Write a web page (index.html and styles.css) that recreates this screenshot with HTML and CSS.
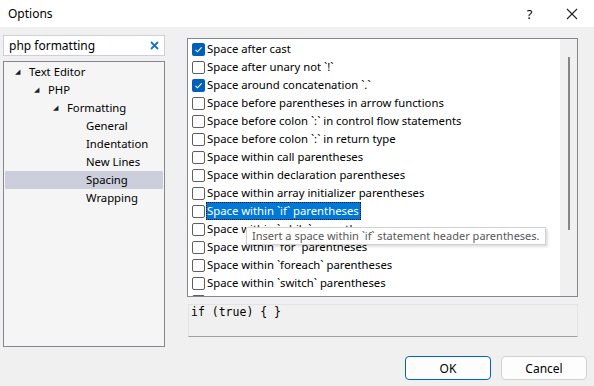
FILE: index.html
```html
<!DOCTYPE html>
<html lang="en">
<head>
    <meta charset="UTF-8">
    <title>Options</title>
    <link rel="stylesheet" href="styles.css">
</head>
<body>
    <!-- Title bar -->
    <div class="titlebar">
        <span class="title">Options</span>
        <span class="title-btn help">?</span>
        <span class="title-btn close">
            <svg width="12" height="12" viewBox="0 0 12 12"><path d="M1 1L11 11M11 1L1 11" stroke="#222" stroke-width="1.1" fill="none"/></svg>
        </span>
    </div>

    <div class="content">
        <!-- Left: search + tree -->
        <div class="left">
            <div class="search">
                <span class="search-text">php formatting</span>
                <svg class="search-clear" width="9" height="9" viewBox="0 0 9 9"><path d="M1 1L8 8M8 1L1 8" stroke="#1c73c6" stroke-width="1.8" fill="none"/></svg>
            </div>
            <ul class="tree">
                <li class="node lvl0"><span class="arrow">◢</span>Text Editor</li>
                <li class="node lvl1"><span class="arrow">◢</span>PHP</li>
                <li class="node lvl2"><span class="arrow">◢</span>Formatting</li>
                <li class="node lvl3">General</li>
                <li class="node lvl3">Indentation</li>
                <li class="node lvl3">New Lines</li>
                <li class="node lvl3 current">Spacing</li>
                <li class="node lvl3">Wrapping</li>
            </ul>
        </div>

        <!-- Right: option list + preview -->
        <div class="right">
            <div class="options">
                <ul class="checks">
                    <li><span class="box checked"></span><span class="label">Space after cast</span></li>
                    <li><span class="box"></span><span class="label">Space after unary not `!`</span></li>
                    <li><span class="box checked"></span><span class="label">Space around concatenation `.`</span></li>
                    <li><span class="box"></span><span class="label">Space before parentheses in arrow functions</span></li>
                    <li><span class="box"></span><span class="label">Space before colon `:` in control flow statements</span></li>
                    <li><span class="box"></span><span class="label">Space before colon `:` in return type</span></li>
                    <li><span class="box"></span><span class="label">Space within call parentheses</span></li>
                    <li><span class="box"></span><span class="label">Space within declaration parentheses</span></li>
                    <li><span class="box"></span><span class="label">Space within array initializer parentheses</span></li>
                    <li><span class="box"></span><span class="label selected">Space within `if` parentheses</span></li>
                    <li><span class="box"></span><span class="label">Space within `while` parentheses</span></li>
                    <li><span class="box"></span><span class="label">Space within `for` parentheses</span></li>
                    <li><span class="box"></span><span class="label">Space within `foreach` parentheses</span></li>
                    <li><span class="box"></span><span class="label">Space within `switch` parentheses</span></li>
                    <li><span class="box"></span></li>
                </ul>
                <div class="scrollbar"><div class="thumb"></div></div>
                <div class="tooltip">Insert a space within `if` statement header parentheses.</div>
            </div>
            <div class="preview">if (true) { }</div>
        </div>
    </div>

    <div class="buttons">
        <button class="btn default">OK</button>
        <button class="btn">Cancel</button>
    </div>
</body>
</html>
```

FILE: styles.css
```css
body {
    margin: 0;
    width: 594px;
    height: 386px;
    overflow: hidden;
    background-color: #f0f0f0;
    font-family: "Noto Sans", sans-serif;
    font-size: 11.3px;
    color: #000;
}

.titlebar {
    height: 27px;
    background-color: #fff;
    display: flex;
    align-items: center;
}

.title {
    flex: 1;
    padding-left: 8px;
    font-size: 12px;
}

.title-btn {
    width: 45px;
    text-align: center;
}

.help {
    font-size: 13px;
    margin-right: -3px;
}

.close {
    display: flex;
    justify-content: center;
}

.content {
    display: flex;
    padding: 8px 16px 0 3px;
    gap: 22px;
}

/* left column */
.left {
    width: 162px;
}

.search {
    height: 19px;
    border: 1px solid #cfcfd8;
    background-color: #fff;
    display: flex;
    align-items: center;
    padding: 0 5px;
    font-size: 12px;
}

.search-text {
    flex: 1;
}

.tree {
    list-style-type: none;
    margin: 5px 0 0 0;
    padding: 1px 1px 0 1px;
    height: 283px;
    border: 1px solid #828790;
    background-color: #f5f5f5;
}

.node {
    height: 18px;
    line-height: 18px;
    display: flex;
    align-items: center;
    white-space: nowrap;
}

.arrow {
    font-size: 7px;
    width: 14px;
    color: #1e1e1e;
}

.lvl0 { padding-left: 10px; }
.lvl1 { padding-left: 29px; }
.lvl2 { padding-left: 48px; }
.lvl3 { padding-left: 81px; }

.current {
    background-color: #cccedb;
}

/* right column */
.right {
    flex: 1;
    display: flex;
    flex-direction: column;
    margin-top: 3px;
}

.options {
    position: relative;
    height: 257px;
    border: 1px solid #828790;
    background-color: #fff;
    display: flex;
    overflow: hidden;
}

.checks {
    list-style-type: none;
    margin: 0;
    padding: 1px 0 0 4px;
    flex: 1;
}

.checks li {
    height: 18px;
    display: flex;
    align-items: center;
    white-space: nowrap;
}

.box {
    width: 11px;
    height: 11px;
    border: 1px solid #5f5f5f;
    border-radius: 2px;
    background-color: #fff;
    margin-right: 1px;
    flex-shrink: 0;
}

.box.checked {
    width: 13px;
    height: 13px;
    border: none;
    background-color: #005fb8;
    background-image: url("data:image/svg+xml,%3Csvg xmlns='http://www.w3.org/2000/svg' width='13' height='13'%3E%3Cpath d='M3.5 6.8L5.5 8.8L9.6 4.4' stroke='%23fff' stroke-width='1.1' fill='none'/%3E%3C/svg%3E");
}

.label {
    padding: 0 1px 0 0;
    line-height: 16px;
    border: 1px solid transparent;
}

.label.selected {
    background-color: #0078d7;
    color: #fff;
    border: 1px dotted #1b1b1b;
}

.scrollbar {
    width: 17px;
    background-color: #f0f0f0;
    display: flex;
    justify-content: center;
    padding-top: 18px;
}

.thumb {
    width: 2px;
    height: 173px;
    background-color: #858585;
}

/* hover tooltip over the list */
.tooltip {
    position: absolute;
    left: 58px;
    top: 188px;
    height: 16px;
    line-height: 16px;
    padding: 0 5px;
    border: 1px solid #d0d0d0;
    background-color: #fff;
    color: #575757;
    font-size: 11px;
    white-space: nowrap;
    box-shadow: 2px 2px 2px rgba(0, 0, 0, 0.12);
}

.preview {
    margin-top: 7px;
    margin-left: 1px;
    height: 31px;
    border: 1px solid #e3e3e3;
    border-bottom-color: #a0a0a0;
    padding: 0 2px;
    font-family: "DejaVu Sans Mono", monospace;
    font-size: 11.5px;
    line-height: 15px;
}

/* dialog buttons */
.buttons {
    display: flex;
    justify-content: flex-end;
    gap: 10px;
    padding: 9px 7px 0 0;
}

.btn {
    width: 86px;
    height: 24px;
    font-family: "Noto Sans", sans-serif;
    font-size: 12px;
    background-color: #fdfdfd;
    border: 1px solid #d0d0d0;
    border-radius: 4px;
    color: #000;
    padding: 0;
}

.btn.default {
    border-color: #0067c0;
}
```
